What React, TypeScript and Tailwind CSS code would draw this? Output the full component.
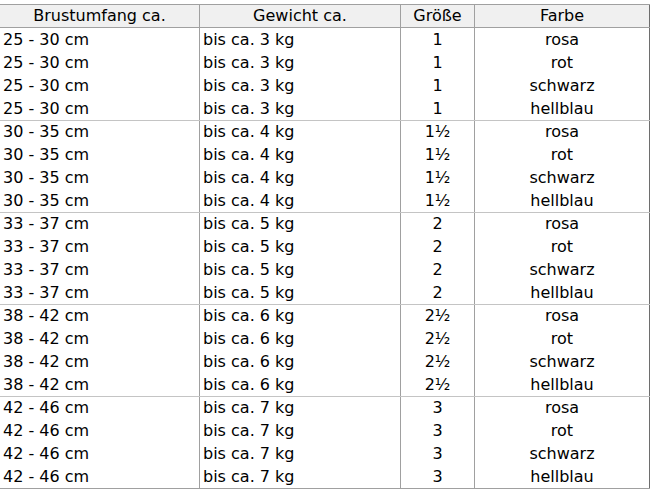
const groups = [
  { brust: '25 - 30 cm', gewicht: 'bis ca. 3 kg', groesse: '1' },
  { brust: '30 - 35 cm', gewicht: 'bis ca. 4 kg', groesse: '1½' },
  { brust: '33 - 37 cm', gewicht: 'bis ca. 5 kg', groesse: '2' },
  { brust: '38 - 42 cm', gewicht: 'bis ca. 6 kg', groesse: '2½' },
  { brust: '42 - 46 cm', gewicht: 'bis ca. 7 kg', groesse: '3' },
];

const farben = ['rosa', 'rot', 'schwarz', 'hellblau'];

export default function App() {
  return (
    <div className="w-[651px] h-[494px] bg-white pt-[4px] text-black font-['DejaVu_Sans',sans-serif] text-[16px] leading-none">
      <div className="w-[650px] border-t border-b border-[#a0a0a0]">
        {/* Header */}
        <div className="flex h-[23px] bg-[#f0f0f0] border-b border-[#a0a0a0]">
          <div className="w-[200px] border-r border-[#a0a0a0] flex items-center justify-center">Brustumfang ca.</div>
          <div className="w-[201px] border-r border-[#a0a0a0] flex items-center justify-center">Gewicht ca.</div>
          <div className="w-[74px] border-r border-[#a0a0a0] flex items-center justify-center">Größe</div>
          <div className="w-[175px] border-r border-[#6e6e6e] flex items-center justify-center">Farbe</div>
        </div>

        {groups.map((g, gi) =>
          farben.map((f, fi) => (
            <div
              key={`${gi}-${fi}`}
              className={`flex h-[23px] ${fi === 0 && gi > 0 ? 'border-t border-[#c4c4c4]' : ''}`}
            >
              <div className="w-[200px] border-r border-[#a0a0a0] flex items-center pl-[3px]">{g.brust}</div>
              <div className="w-[201px] border-r border-[#a0a0a0] flex items-center pl-[3px]">{g.gewicht}</div>
              <div className="w-[74px] border-r border-[#a0a0a0] flex items-center justify-center">{g.groesse}</div>
              <div className="w-[175px] border-r border-[#6e6e6e] flex items-center justify-center">{f}</div>
            </div>
          ))
        )}
      </div>
    </div>
  );
}
